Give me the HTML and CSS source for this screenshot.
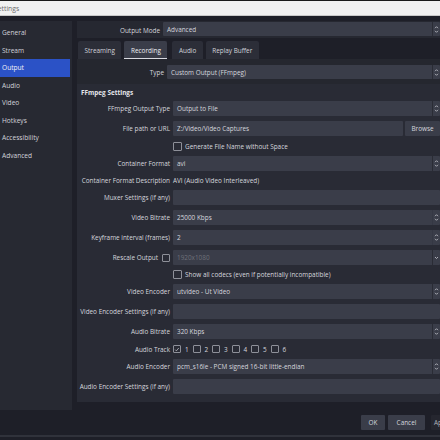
FILE: index.html
```html
<!DOCTYPE html>
<html>
<head>
<meta charset="utf-8">
<link rel="stylesheet" href="styles.css">
</head>
<body>
<div class="titlebar"><span class="title">Settings</span></div>
<div class="main">
  <nav class="sidebar">
    <div class="nav-item">General</div>
    <div class="nav-item">Stream</div>
    <div class="nav-item active">Output</div>
    <div class="nav-item">Audio</div>
    <div class="nav-item">Video</div>
    <div class="nav-item">Hotkeys</div>
    <div class="nav-item">Accessibility</div>
    <div class="nav-item">Advanced</div>
  </nav>
  <section class="content">
    <div class="mode-row">
      <span class="lbl mode-lbl">Output Mode</span>
      <div class="field combo">Advanced<span class="arrows"><svg viewBox="0 0 5 9" width="5" height="9"><path d="M1 3.2 2.5 1.7 4 3.2M1 5.8 2.5 7.3 4 5.8" fill="none" stroke="#c9cad2" stroke-width="0.8"/></svg></span></div>
    </div>
    <div class="tabs">
      <div class="tab">Streaming</div>
      <div class="tab selected">Recording</div>
      <div class="tab">Audio</div>
      <div class="tab">Replay Buffer</div>
    </div>
    <div class="tab-panel">
      <div class="type-row">
        <span class="lbl type-lbl">Type</span>
        <div class="field combo">Custom Output (FFmpeg)<span class="arrows"><svg viewBox="0 0 5 9" width="5" height="9"><path d="M1 3.2 2.5 1.7 4 3.2M1 5.8 2.5 7.3 4 5.8" fill="none" stroke="#c9cad2" stroke-width="0.8"/></svg></span></div>
      </div>
      <div class="group">
        <div class="group-title">FFmpeg Settings</div>
        <div class="form">
          <span class="lbl">FFmpeg Output Type</span>
          <div class="field combo">Output to File<span class="arrows"><svg viewBox="0 0 5 9" width="5" height="9"><path d="M1 3.2 2.5 1.7 4 3.2M1 5.8 2.5 7.3 4 5.8" fill="none" stroke="#c9cad2" stroke-width="0.8"/></svg></span></div>

          <span class="lbl">File path or URL</span>
          <div class="path-row"><div class="field text">Z:/Video/Video Captures</div><div class="btn browse">Browse</div></div>

          <span class="lbl"></span>
          <div class="check-row"><span class="box"></span><span>Generate File Name without Space</span></div>

          <span class="lbl">Container Format</span>
          <div class="field combo">avi<span class="arrows"><svg viewBox="0 0 5 9" width="5" height="9"><path d="M1 3.2 2.5 1.7 4 3.2M1 5.8 2.5 7.3 4 5.8" fill="none" stroke="#c9cad2" stroke-width="0.8"/></svg></span></div>

          <span class="lbl">Container Format Description</span>
          <div class="plain">AVI (Audio Video Interleaved)</div>

          <span class="lbl">Muxer Settings (if any)</span>
          <div class="field text"></div>

          <span class="lbl">Video Bitrate</span>
          <div class="field combo">25000 Kbps<span class="arrows spin"><svg viewBox="0 0 5 9" width="5" height="9"><path d="M1 3.2 2.5 1.7 4 3.2M1 5.8 2.5 7.3 4 5.8" fill="none" stroke="#c9cad2" stroke-width="0.8"/></svg></span></div>

          <span class="lbl">Keyframe interval (frames)</span>
          <div class="field combo">2<span class="arrows spin"><svg viewBox="0 0 5 9" width="5" height="9"><path d="M1 3.2 2.5 1.7 4 3.2M1 5.8 2.5 7.3 4 5.8" fill="none" stroke="#c9cad2" stroke-width="0.8"/></svg></span></div>

          <span class="lbl rescale">Rescale Output <span class="box"></span></span>
          <div class="field combo disabled">1920x1080<span class="arrows"><svg viewBox="0 0 5 9" width="5" height="9"><path d="M1 4 2.5 5.5 4 4" fill="none" stroke="#c9cad2" stroke-width="0.8"/></svg></span></div>

          <span class="lbl"></span>
          <div class="check-row"><span class="box"></span><span>Show all codecs (even if potentially incompatible)</span></div>

          <span class="lbl">Video Encoder</span>
          <div class="field combo">utvideo - Ut Video<span class="arrows"><svg viewBox="0 0 5 9" width="5" height="9"><path d="M1 3.2 2.5 1.7 4 3.2M1 5.8 2.5 7.3 4 5.8" fill="none" stroke="#c9cad2" stroke-width="0.8"/></svg></span></div>

          <span class="lbl">Video Encoder Settings (if any)</span>
          <div class="field text"></div>

          <span class="lbl">Audio Bitrate</span>
          <div class="field combo">320 Kbps<span class="arrows"><svg viewBox="0 0 5 9" width="5" height="9"><path d="M1 3.2 2.5 1.7 4 3.2M1 5.8 2.5 7.3 4 5.8" fill="none" stroke="#c9cad2" stroke-width="0.8"/></svg></span></div>

          <span class="lbl">Audio Track</span>
          <div class="tracks">
            <span class="track"><span class="box checked"><svg viewBox="0 0 8 8" width="8" height="8"><path d="M1.6 4.2 3.2 5.8 6.4 2" fill="none" stroke="#d8d8de" stroke-width="0.9"/></svg></span>1</span>
            <span class="track"><span class="box"></span>2</span>
            <span class="track"><span class="box"></span>3</span>
            <span class="track"><span class="box"></span>4</span>
            <span class="track"><span class="box"></span>5</span>
            <span class="track"><span class="box"></span>6</span>
          </div>

          <span class="lbl">Audio Encoder</span>
          <div class="field combo">pcm_s16le - PCM signed 16-bit little-endian<span class="arrows"><svg viewBox="0 0 5 9" width="5" height="9"><path d="M1 3.2 2.5 1.7 4 3.2M1 5.8 2.5 7.3 4 5.8" fill="none" stroke="#c9cad2" stroke-width="0.8"/></svg></span></div>

          <span class="lbl">Audio Encoder Settings (if any)</span>
          <div class="field text"></div>
        </div>
      </div>
    </div>
  </section>
</div>
<div class="footer">
  <div class="btn">OK</div>
  <div class="btn cancel">Cancel</div>
  <div class="btn apply">Apply</div>
</div>
<div class="bottom-line"></div>
</body>
</html>
```

FILE: styles.css
```css
html, body {
  margin: 0;
  padding: 0;
}
body {
  width: 440px;
  height: 440px;
  overflow: hidden;
  background: #1e1f28;
  font-family: "Open Sans", "Noto Sans", sans-serif;
  font-size: 6.4px;
  color: #d6d7de;
}
.titlebar {
  height: 14px;
  border-top: 1px solid #1a1a1a;
  border-bottom: 1px solid #c9c9c9;
  background: #f1f1f1;
  color: #6b6b6b;
  display: flex;
  align-items: center;
  overflow: hidden;
}
.title {
  margin-left: -6px;
  font-size: 6.8px;
}
.main {
  display: flex;
  margin-top: 5px;
  height: 389px;
}
.sidebar {
  width: 72px;
  flex: none;
  background: #272932;
  padding-top: 3px;
  box-sizing: border-box;
}
.nav-item {
  height: 17.5px;
  line-height: 17.5px;
  padding-left: 2px;
  margin-right: 2px;
  color: #d2d3da;
  font-size: 6.6px;
}
.nav-item.active {
  background: #2b52c6;
  color: #f2f3f8;
}
.content {
  flex: 1;
  margin-left: 5px;
  display: flex;
  flex-direction: column;
  min-width: 0;
  height: 381px;
}
.lbl {
  white-space: nowrap;
  display: flex;
  align-items: center;
  justify-content: flex-end;
}
.field {
  height: 15px;
  background: #3a3d49;
  border-radius: 1px;
  display: flex;
  align-items: center;
  padding-left: 4px;
  box-sizing: border-box;
  position: relative;
  white-space: nowrap;
  min-width: 0;
}
.combo {
  padding-right: 8px;
}
.arrows {
  position: absolute;
  right: 0;
  top: 0;
  bottom: 0;
  width: 7px;
  border-left: 1px solid #2a2c35;
  display: flex;
  align-items: center;
  justify-content: center;
}
.arrows.spin {
  border-left-color: #353844;
}
.mode-row {
  flex: none;
  height: 17px;
  background: #262831;
  display: grid;
  grid-template-columns: 83px 1fr;
  column-gap: 3px;
  padding-top: 1px;
  box-sizing: border-box;
}
.mode-row .field {
  height: 14px;
}
.tabs {
  flex: none;
  display: flex;
  gap: 3px;
  margin-top: 3px;
  padding-left: 1px;
  height: 18px;
}
.tab {
  padding: 0 6.5px;
  background: #2c2e38;
  display: flex;
  align-items: center;
  border-radius: 2px 2px 0 0;
  color: #d2d3da;
}
.tab.selected {
  background: #3a3d49;
  box-shadow: inset 0 -1px 0 #d8d9e0;
  color: #eceef3;
}
.tabs .tab:nth-child(3) {
  margin-left: 2px;
}
.tab-panel {
  flex: 1;
  background: #25272f;
  padding-top: 6px;
  display: flex;
  flex-direction: column;
  min-height: 0;
}
.type-row {
  flex: none;
  display: grid;
  grid-template-columns: 87px 1fr;
  column-gap: 3px;
}
.type-row .field {
  height: 14px;
}
.group {
  margin-top: 5px;
  flex: 1;
  background: #292b35;
  padding-left: 4px;
  padding-top: 3px;
}
.group-title {
  font-weight: 700;
  height: 11px;
  display: flex;
  align-items: center;
  color: #e4e5ea;
}
.form {
  margin-top: 3px;
  display: grid;
  grid-template-columns: 89px 1fr;
  grid-template-rows: 15px 15px 10px 15px 9px 15px 15px 15px 15px 9px 15px 15px 15px 10px 15px 15px;
  column-gap: 3px;
  row-gap: 5px;
}
.plain {
  display: flex;
  align-items: center;
  white-space: nowrap;
}
.path-row {
  display: flex;
  gap: 2px;
}
.path-row .field {
  flex: 1;
}
.btn {
  height: 15px;
  background: #3a3d49;
  display: flex;
  align-items: center;
  justify-content: center;
  border-radius: 1px;
  color: #d6d7de;
}
.browse {
  width: 35px;
  flex: none;
}
.box {
  width: 8px;
  height: 8px;
  border: 1px solid #8e9099;
  border-radius: 1px;
  box-sizing: border-box;
  display: inline-flex;
  align-items: center;
  justify-content: center;
  flex: none;
}
.box.checked svg {
  width: 7px;
  height: 7px;
}
.check-row {
  display: flex;
  align-items: center;
  gap: 3px;
  white-space: nowrap;
}
.check-row .box {
  width: 9px;
  height: 9px;
}
.rescale {
  gap: 4px;
}
.disabled {
  color: #6f717a;
}
.tracks {
  display: flex;
  align-items: center;
}
.track {
  display: inline-flex;
  align-items: center;
  gap: 4px;
  width: 19.5px;
}
.footer {
  display: flex;
  justify-content: flex-end;
  gap: 3px;
  padding-top: 5px;
  height: 15px;
  margin-right: -28px;
}
.footer .btn {
  width: 24px;
}
.footer .cancel {
  width: 37px;
}
.footer .apply {
  width: 37px;
  margin-left: 3px;
  background: #25262f;
  color: #b4b5bd;
  justify-content: flex-start;
  padding-left: 3px;
  box-sizing: border-box;
}
.bottom-line {
  margin-top: 5px;
  height: 2px;
  background: #30323b;
}
```
